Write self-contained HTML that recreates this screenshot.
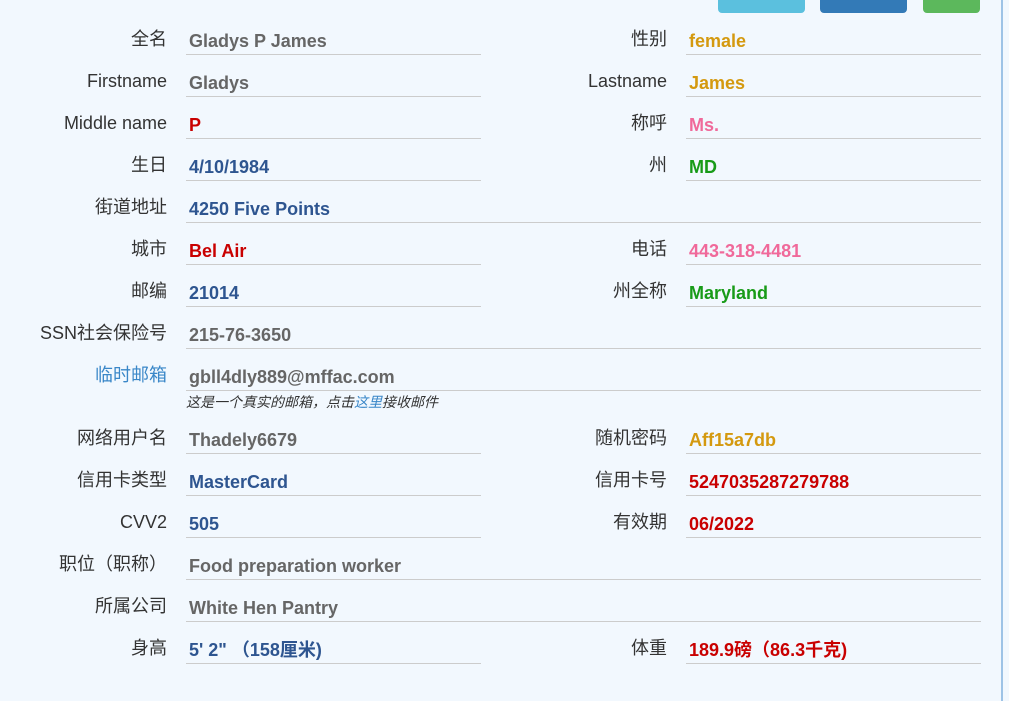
<!DOCTYPE html>
<html><head><meta charset="utf-8"><style>
body{margin:0;width:1009px;height:701px;background:#f2f8fe;font-family:"Liberation Sans","Noto Sans CJK SC",sans-serif;position:relative;overflow:hidden}
.l{position:absolute;width:160px;text-align:right;font-size:18px;color:#333;line-height:22px}
.v{position:absolute;font-size:18px;font-weight:bold;line-height:22px;white-space:nowrap}
.u{position:absolute;height:1px;background:#ccc}
.b{position:absolute;top:-8px;height:21px;border-radius:4px}
.g{color:#666}.o{color:#d4990f}.r{color:#c90000}.p{color:#f0699a}.bl{color:#2e5590}.gr{color:#189b18}
</style></head><body>
<div class="b" style="left:718px;width:87px;background:#5bc0de"></div>
<div class="b" style="left:820px;width:87px;background:#337ab7"></div>
<div class="b" style="left:923px;width:57px;background:#5cb85c"></div>
<div style="position:absolute;left:1001px;top:0;width:2px;height:701px;background:#9ec3e6"></div>

<div class="l" style="left:7px;top:28px">全名</div><div class="v g" style="left:189px;top:30px">Gladys P James</div><div class="u" style="left:186px;width:295px;top:54px"></div>
<div class="l" style="left:507px;top:28px">性别</div><div class="v o" style="left:689px;top:30px">female</div><div class="u" style="left:686px;width:295px;top:54px"></div>

<div class="l" style="left:7px;top:70px">Firstname</div><div class="v g" style="left:189px;top:72px">Gladys</div><div class="u" style="left:186px;width:295px;top:96px"></div>
<div class="l" style="left:507px;top:70px">Lastname</div><div class="v o" style="left:689px;top:72px">James</div><div class="u" style="left:686px;width:295px;top:96px"></div>

<div class="l" style="left:7px;top:112px">Middle name</div><div class="v r" style="left:189px;top:114px">P</div><div class="u" style="left:186px;width:295px;top:138px"></div>
<div class="l" style="left:507px;top:112px">称呼</div><div class="v p" style="left:689px;top:114px">Ms.</div><div class="u" style="left:686px;width:295px;top:138px"></div>

<div class="l" style="left:7px;top:154px">生日</div><div class="v bl" style="left:189px;top:156px">4/10/1984</div><div class="u" style="left:186px;width:295px;top:180px"></div>
<div class="l" style="left:507px;top:154px">州</div><div class="v gr" style="left:689px;top:156px">MD</div><div class="u" style="left:686px;width:295px;top:180px"></div>

<div class="l" style="left:7px;top:196px">街道地址</div><div class="v bl" style="left:189px;top:198px">4250 Five Points</div><div class="u" style="left:186px;width:795px;top:222px"></div>

<div class="l" style="left:7px;top:238px">城市</div><div class="v r" style="left:189px;top:240px">Bel Air</div><div class="u" style="left:186px;width:295px;top:264px"></div>
<div class="l" style="left:507px;top:238px">电话</div><div class="v p" style="left:689px;top:240px">443-318-4481</div><div class="u" style="left:686px;width:295px;top:264px"></div>

<div class="l" style="left:7px;top:280px">邮编</div><div class="v bl" style="left:189px;top:282px">21014</div><div class="u" style="left:186px;width:295px;top:306px"></div>
<div class="l" style="left:507px;top:280px">州全称</div><div class="v gr" style="left:689px;top:282px">Maryland</div><div class="u" style="left:686px;width:295px;top:306px"></div>

<div class="l" style="left:7px;top:322px">SSN社会保险号</div><div class="v g" style="left:189px;top:324px">215-76-3650</div><div class="u" style="left:186px;width:795px;top:348px"></div>

<div class="l" style="left:7px;top:364px;color:#3a87c8">临时邮箱</div><div class="v g" style="left:189px;top:366px">gbll4dly889@mffac.com</div><div class="u" style="left:186px;width:795px;top:390px"></div>
<div style="position:absolute;left:186px;top:393px;font-size:14px;font-style:italic;color:#333;line-height:18px">这是一个真实的邮箱，点击<span style="color:#3a87c8">这里</span>接收邮件</div>

<div class="l" style="left:7px;top:427px">网络用户名</div><div class="v g" style="left:189px;top:429px">Thadely6679</div><div class="u" style="left:186px;width:295px;top:453px"></div>
<div class="l" style="left:507px;top:427px">随机密码</div><div class="v o" style="left:689px;top:429px">Aff15a7db</div><div class="u" style="left:686px;width:295px;top:453px"></div>

<div class="l" style="left:7px;top:469px">信用卡类型</div><div class="v bl" style="left:189px;top:471px">MasterCard</div><div class="u" style="left:186px;width:295px;top:495px"></div>
<div class="l" style="left:507px;top:469px">信用卡号</div><div class="v r" style="left:689px;top:471px">5247035287279788</div><div class="u" style="left:686px;width:295px;top:495px"></div>

<div class="l" style="left:7px;top:511px">CVV2</div><div class="v bl" style="left:189px;top:513px">505</div><div class="u" style="left:186px;width:295px;top:537px"></div>
<div class="l" style="left:507px;top:511px">有效期</div><div class="v r" style="left:689px;top:513px">06/2022</div><div class="u" style="left:686px;width:295px;top:537px"></div>

<div class="l" style="left:7px;top:553px">职位（职称）</div><div class="v g" style="left:189px;top:555px">Food preparation worker</div><div class="u" style="left:186px;width:795px;top:579px"></div>

<div class="l" style="left:7px;top:595px">所属公司</div><div class="v g" style="left:189px;top:597px">White Hen Pantry</div><div class="u" style="left:186px;width:795px;top:621px"></div>

<div class="l" style="left:7px;top:637px">身高</div><div class="v bl" style="left:189px;top:639px">5' 2" （158厘米)</div><div class="u" style="left:186px;width:295px;top:663px"></div>
<div class="l" style="left:507px;top:637px">体重</div><div class="v r" style="left:689px;top:639px">189.9磅（86.3千克)</div><div class="u" style="left:686px;width:295px;top:663px"></div>
</body></html>
